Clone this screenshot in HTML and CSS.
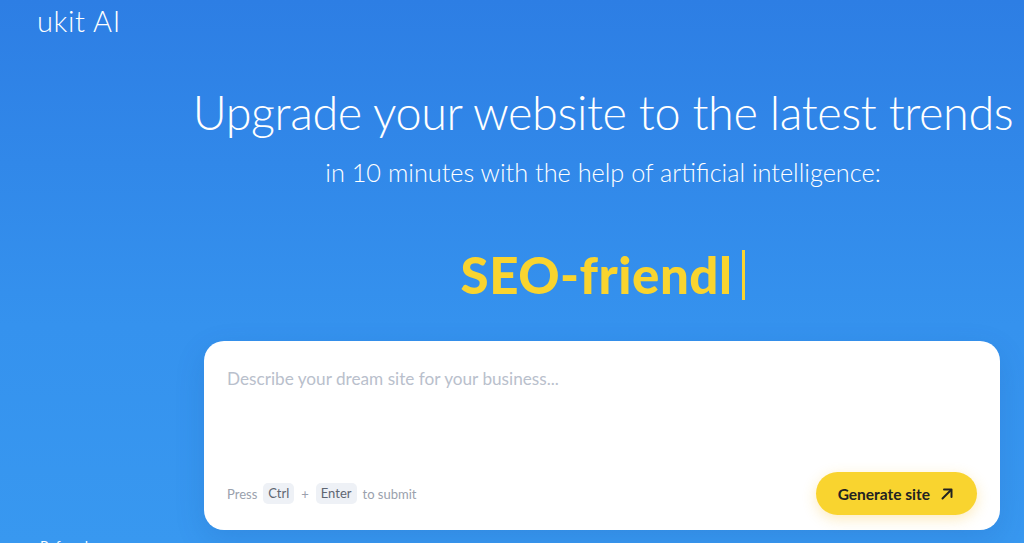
FILE: index.html
```html
<!DOCTYPE html>
<html>

<head>
	<title>ukit AI</title>
	<link rel="stylesheet" href="styles.css">
</head>

<body>
	<div class="page">
		<aside class="sidebar">
			<div class="logo">ukit AI</div>
			<a class="ref" href="#">Referral program</a>
		</aside>

		<main class="hero">
			<h1>Upgrade your website to the latest trends</h1>
			<p class="lead">in 10 minutes with the help of artificial intelligence:</p>
			<div class="typed">SEO-friendl<span class="caret"></span></div>

			<form class="prompt">
				<textarea placeholder="Describe your dream site for your business..."></textarea>
				<div class="prompt-footer">
					<div class="hint">Press <kbd>Ctrl</kbd> <span class="plus">+</span> <kbd>Enter</kbd> to submit</div>
					<button type="button" class="generate">
						Generate site
						<svg width="14" height="14" viewBox="0 0 14 14" fill="none" stroke="#222" stroke-width="2" stroke-linecap="round" stroke-linejoin="round">
							<path d="M2.5 11.5L11 3" />
							<path d="M4 2.5h7.5V10" />
						</svg>
					</button>
				</div>
			</form>
		</main>
	</div>
</body>

</html>
```

FILE: styles.css
```css
* {
	box-sizing: border-box;
}

body {
	margin: 0;
	height: 100vh;
	overflow: hidden;
	font-family: Lato, "Open Sans", sans-serif;
	color: #fff;
	background: linear-gradient(180deg, #2d7ee4 0%, #3592ee 60%, #3898f0 100%);
}

.page {
	display: flex;
	min-height: 560px;
}

.sidebar {
	width: 182px;
	flex-shrink: 0;
	display: flex;
	flex-direction: column;
	padding: 3px 0 6px 37px;
}

.logo {
	font-size: 29px;
	font-weight: 300;
	letter-spacing: 0.6px;
}

.ref {
	margin-top: auto;
	margin-left: 3px;
	color: #fff;
	font-size: 14px;
	text-decoration: none;
}

.hero {
	flex: 1;
	min-width: 0;
	display: flex;
	flex-direction: column;
	align-items: center;
	padding-top: 80px;
}

h1 {
	margin: 0;
	font-size: 46.8px;
	font-weight: 300;
	line-height: 64px;
	letter-spacing: -0.4px;
	white-space: nowrap;
}

.lead {
	margin: 14px 0 0;
	font-size: 25.3px;
	font-weight: 300;
	line-height: 28px;
}

.typed {
	display: flex;
	align-items: center;
	margin-top: 61px;
	color: #f9d42f;
	font-size: 51px;
	font-weight: 900;
	line-height: 56px;
	letter-spacing: 0.5px;
}

.caret {
	width: 3px;
	height: 50px;
	margin-left: 10px;
	background-color: #f9d42f;
}

.prompt {
	width: 796px;
	margin-top: 38px;
	margin-right: 2px;
	background-color: #fff;
	border-radius: 20px;
	padding: 27px 23px 15px;
	display: flex;
	flex-direction: column;
	box-shadow: 0 10px 30px rgba(20, 70, 150, 0.15);
}

textarea {
	border: none;
	outline: none;
	resize: none;
	height: 104px;
	padding: 0;
	font-family: Lato, sans-serif;
	font-size: 17.2px;
	color: #222;
}

textarea::placeholder {
	color: #b9c0cc;
}

.prompt-footer {
	display: flex;
	justify-content: space-between;
	align-items: center;
}

.hint {
	display: flex;
	align-items: center;
	gap: 6px;
	font-size: 13px;
	color: #9aa1ad;
}

.plus {
	margin: 0 1px;
}

kbd {
	font-family: Lato, sans-serif;
	font-size: 13px;
	line-height: 15px;
	color: #5f6672;
	background-color: #eef1f6;
	padding: 3px 5px;
	border-radius: 5px;
}

.generate {
	display: flex;
	align-items: center;
	gap: 10px;
	height: 43px;
	padding: 0 23px 0 22px;
	border: none;
	border-radius: 22px;
	background-color: #f9d42f;
	color: #222;
	font-family: Lato, sans-serif;
	font-size: 15.5px;
	font-weight: 700;
	cursor: pointer;
	box-shadow: 0 4px 14px rgba(249, 190, 40, 0.3);
}
```
